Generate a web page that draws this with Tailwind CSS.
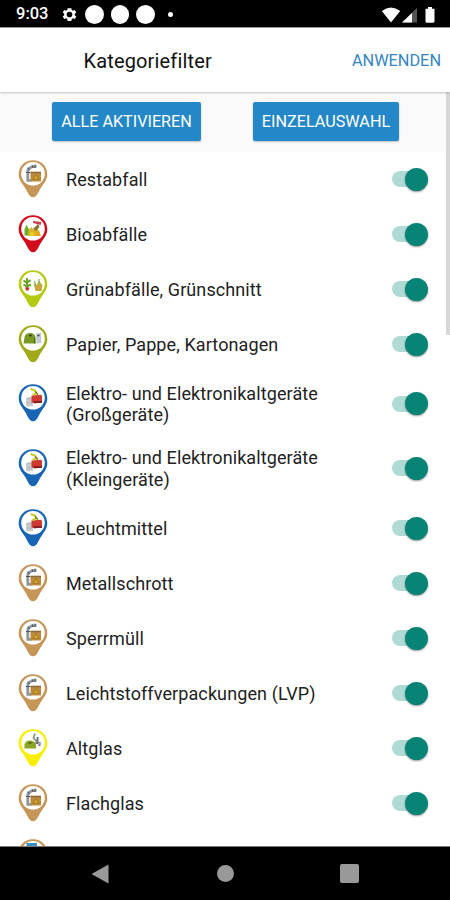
<!DOCTYPE html>
<html lang="de">
<head>
<meta charset="utf-8">
<title>Kategoriefilter</title>
<script src="https://cdn.jsdelivr.net/npm/@tailwindcss/browser@4"></script>
</head>
<body class="bg-white">
<svg class="hidden">
  <symbol id="pin" viewBox="0 0 30 38">
    <path d="M15 .3C6.700 .3.700 6.200.700 14.300c0 5.200 2.700 8.200 5.500 12.200 2.500 3.500 3.500 6.700 5.500 9.200q3.300 3 6.600 0c2-2.500 3-5.700 5.500-9.200 2.800-4 5.500-7 5.500-12.200C29.300 6.200 23.300.3 15 .3z" fill="currentColor"/>
    <circle cx="15" cy="13.800" r="11.800" fill="#fff"/>
  </symbol>
  <symbol id="bin" viewBox="0 0 30 38">
    <path d="M13.500 20.300H9.800V12Q9.500 6.500 18.500 6.300" fill="none" stroke="#8b959c" stroke-width="2.800"/>
    <path d="M8 12.500h4M9.500 8l2.500 2M14 5l1 3M17 4.500v3.500" stroke="#4b5358" stroke-width="1"/>
    <path d="M12.500 11.800h10.500v9.700H12.500z" fill="#bd8b3c"/>
    <path d="M12.500 11.800h10.500v1.500H12.500z" fill="#8b6b42"/>
    <path d="M18 14.500l3 5h-6z" fill="#d6a326" stroke="#94702a" stroke-width=".7"/>
  </symbol>
  <symbol id="bio" viewBox="0 0 30 38">
    <path d="M6.500 20.500v-6l2-5 2.500 5v6z" fill="#6cac2c"/>
    <path d="M10.500 15l3-3 2 3 4-1 2.500 3-1 4h-10.500z" fill="#dcb425"/>
    <path d="M15 14l5-5 1.500 3-3.500 4z" fill="#8a7430"/>
    <path d="M15 6l8.500 1-1 3-7.500-2z" fill="#c8414c"/>
    <path d="M18 18l3-1 2 4h-5z" fill="#eda020"/>
    <circle cx="14" cy="19" r="2" fill="#f0cf1b"/>
  </symbol>
  <symbol id="plant" viewBox="0 0 30 38">
    <path d="M9 19V8M5.500 10.500l3.500 2.500 3.500-3M5.500 14.500l3.500 2 4-2" fill="none" stroke="#6ba126" stroke-width="2"/>
    <path d="M7 17.500h4.500l-1 3H8z" fill="#c43334"/>
    <path d="M15.500 13l3 2 2.500-4 3.500 4-1 6h-6z" fill="#b4b13a"/>
    <path d="M19.500 15l3 1-1 4h-3z" fill="#e89a43"/>
    <path d="M16.500 11l1 4M21 9v4" stroke="#6d9d27"/>
  </symbol>
  <symbol id="paper" viewBox="0 0 30 38">
    <path d="M5.500 18.500l1-6.500q1-4 5.500-4t5.500 4l.5 6.500z" fill="#789b28"/>
    <path d="M18 8.500l5-1 .5 10.500-5 .5z" fill="#c4cbd5"/>
    <path d="M11 10.500h3M19.500 10.500h2" stroke="#304125" stroke-width="1.600"/>
    <path d="M16.500 12v6.500" stroke="#4f711d"/>
  </symbol>
  <symbol id="electro" viewBox="0 0 30 38">
    <path d="M8 14l5-1 2 1v8l-5 .5-2-1z" fill="#c9cccd"/>
    <path d="M9 15l4-1M9 19h5" stroke="#a9aeb0" stroke-width=".8"/>
    <path d="M13.500 11.500l9.500-.8 1 1v7l-8 .5-2.500-1z" fill="#cf3a31"/>
    <path d="M15.500 17h8.500v1.800l-8 .5z" fill="#861f22"/>
    <path d="M12.500 5l4.500 1.500 1.500 3-4 1.500" fill="none" stroke="#c8ce25" stroke-width="1.900"/>
    <path d="M17 7.500l3 3" stroke="#77742d" stroke-width="1.300"/>
  </symbol>
  <symbol id="glass" viewBox="0 0 30 38">
    <path d="M6.500 19.500v-4q1-4 5.500-4t6 4v4z" fill="#8ba522"/>
    <path d="M10.500 14h3" stroke="#4a5d1c" stroke-width="1.500"/>
    <path d="M17 4.500l-1.500 4.500 3 3.500" fill="none" stroke="#899d78" stroke-width="1.800"/>
    <path d="M19.500 8v5M17.500 14h4v3" fill="none" stroke="#666b70" stroke-width="1.900"/>
    <path d="M20 14.500h3" stroke="#a8adb2" stroke-width="2"/>
  </symbol>
  <symbol id="flat" viewBox="0 0 30 38">
    <path d="M10 9V5.500h9" fill="none" stroke="#3b91c6" stroke-width="3"/>
  </symbol>
</svg>

<div class="flex h-[900px] w-[450px] flex-col overflow-hidden bg-white font-['Roboto',sans-serif] text-black">
  <header class="flex h-[27px] shrink-0 items-center bg-black pt-[2px] text-white">
    <span class="ml-[16px] w-[45px] text-[16.500px] font-medium">9:03</span>
    <svg class="size-[17px]" viewBox="0 0 24 24" fill="#fff"><path fill-rule="evenodd" d="M19.400 13a7.800 7.800 0 0 0 0-2l2.200-1.700-2.200-3.700-2.600 1a7.500 7.500 0 0 0-1.700-1L14.700 3H9.300l-.4 2.600a7.500 7.500 0 0 0-1.700 1l-2.600-1-2.200 3.700L4.600 11a7.800 7.800 0 0 0 0 2l-2.200 1.700 2.200 3.700 2.600-1a7.500 7.500 0 0 0 1.700 1l.4 2.600h5.400l.4-2.600a7.500 7.500 0 0 0 1.700-1l2.600 1 2.200-3.700zM12 8a4 4 0 1 1 0 8 4 4 0 0 1 0-8z"/></svg>
    <div class="ml-[7px] flex gap-[7px]"><i class="size-[18.500px] rounded-full bg-white"></i><i class="size-[18.500px] rounded-full bg-white"></i><i class="size-[18.500px] rounded-full bg-white"></i></div>
    <i class="ml-[13px] size-[5px] rounded-full bg-white"></i>
    <svg class="ml-auto mr-[14px] h-[18px] w-[55px]" viewBox="0 0 55 18"><path d="M.800 5Q10 -2 19.200 5L10 16.500z" fill="#fff"/><path d="M36 2v14.500H21z" fill="#555"/><path d="M31 7v9.500H21z" fill="#fff"/><path d="M47 1h4v1.700h2.500v12.500q0 1.500-1.500 1.500h-6q-1.500 0-1.500-1.500V2.700H47z" fill="#fff"/></svg>
  </header>
  <div class="relative z-10 flex h-[65px] shrink-0 items-center justify-between border-t border-[#999] bg-white pl-[83.500px] pr-[9px] shadow-[0_1px_2px_rgba(0,0,0,0.22)]">
    <h1 class="pt-px text-[20px] tracking-[0.150px] text-[#111]">Kategoriefilter</h1>
    <button class="pt-[3px] text-[16.300px] text-[#3585c4]">ANWENDEN</button>
  </div>
  <main class="relative h-[754px] shrink-0 overflow-hidden">
    <div class="flex h-[60px] items-start bg-[#fafafa] pl-[52px] pt-[10px] text-[16.200px] text-white">
      <button class="h-[39px] w-[149px] rounded-[2px] bg-[#2487c8] pt-[2px] shadow-[0_1px_2px_rgba(0,0,0,0.25)]">ALLE AKTIVIEREN</button>
      <button class="ml-[52px] h-[39px] w-[146px] rounded-[2px] bg-[#2487c8] pt-[2px] shadow-[0_1px_2px_rgba(0,0,0,0.25)]">EINZELAUSWAHL</button>
    </div>
    <ul id="categories"></ul>
    <div class="absolute right-0 top-0 h-[243px] w-[4px] bg-[#d7d7d7]"></div>
  </main>
  <nav class="flex h-[54px] shrink-0 items-center border-t border-[#777] bg-black pl-[91px]">
    <svg class="h-[20px] w-[18px]" viewBox="0 0 18 20"><path d="M.5 10L17.500.500v19z" fill="#999"/></svg>
    <i class="ml-[108px] size-[17px] rounded-full bg-[#999]"></i>
    <i class="ml-[106px] size-[19px] rounded-[2px] bg-[#999]"></i>
  </nav>
</div>
<script>
const tan = 'text-[#c69659]', blue = 'text-[#1765b4]';
const items = [
  ['Restabfall', tan, 'bin'],
  ['Bioabfälle', 'text-[#d20b1c]', 'bio'],
  ['Grünabfälle, Grünschnitt', 'text-[#b5ca13]', 'plant'],
  ['Papier, Pappe, Kartonagen', 'text-[#a0aa19]', 'paper'],
  ['Elektro- und Elektronikaltgeräte<br>(Großgeräte)', blue, 'electro'],
  ['Elektro- und Elektronikaltgeräte<br>(Kleingeräte)', blue, 'electro'],
  ['Leuchtmittel', blue, 'electro'],
  ['Metallschrott', tan, 'bin'],
  ['Sperrmüll', tan, 'bin'],
  ['Leichtstoffverpackungen (LVP)', tan, 'bin'],
  ['Altglas', 'text-[#f8ee00]', 'glass'],
  ['Flachglas', tan, 'bin'],
  ['', tan, 'flat']
];
document.getElementById('categories').innerHTML = items.map(([label, color, icon]) => `
  <li class="flex ${label.includes('<br>') ? 'h-[64.500px]' : 'h-[55px]'} items-center pl-[18px] pr-[20px]">
    <svg class="mb-[2px] h-[38px] w-[30px] shrink-0 ${color}" viewBox="0 0 30 38"><use href="#pin"/><use href="#${icon}"/></svg>
    <span class="ml-[18px] grow text-[18px] leading-[21.500px] tracking-[0.100px] text-[#222]">${label}</span>
    <span class="mb-px flex h-[24px] w-[38px] shrink-0 items-center"><i class="h-[16px] w-[28px] shrink-0 rounded-full bg-[#b0dbd4]"></i><i class="-ml-[15px] size-[23px] shrink-0 rounded-full bg-[#078476] shadow-[0_1px_2px_rgba(0,0,0,0.4)]"></i></span>
  </li>`).join('');
</script>
</body>
</html>
